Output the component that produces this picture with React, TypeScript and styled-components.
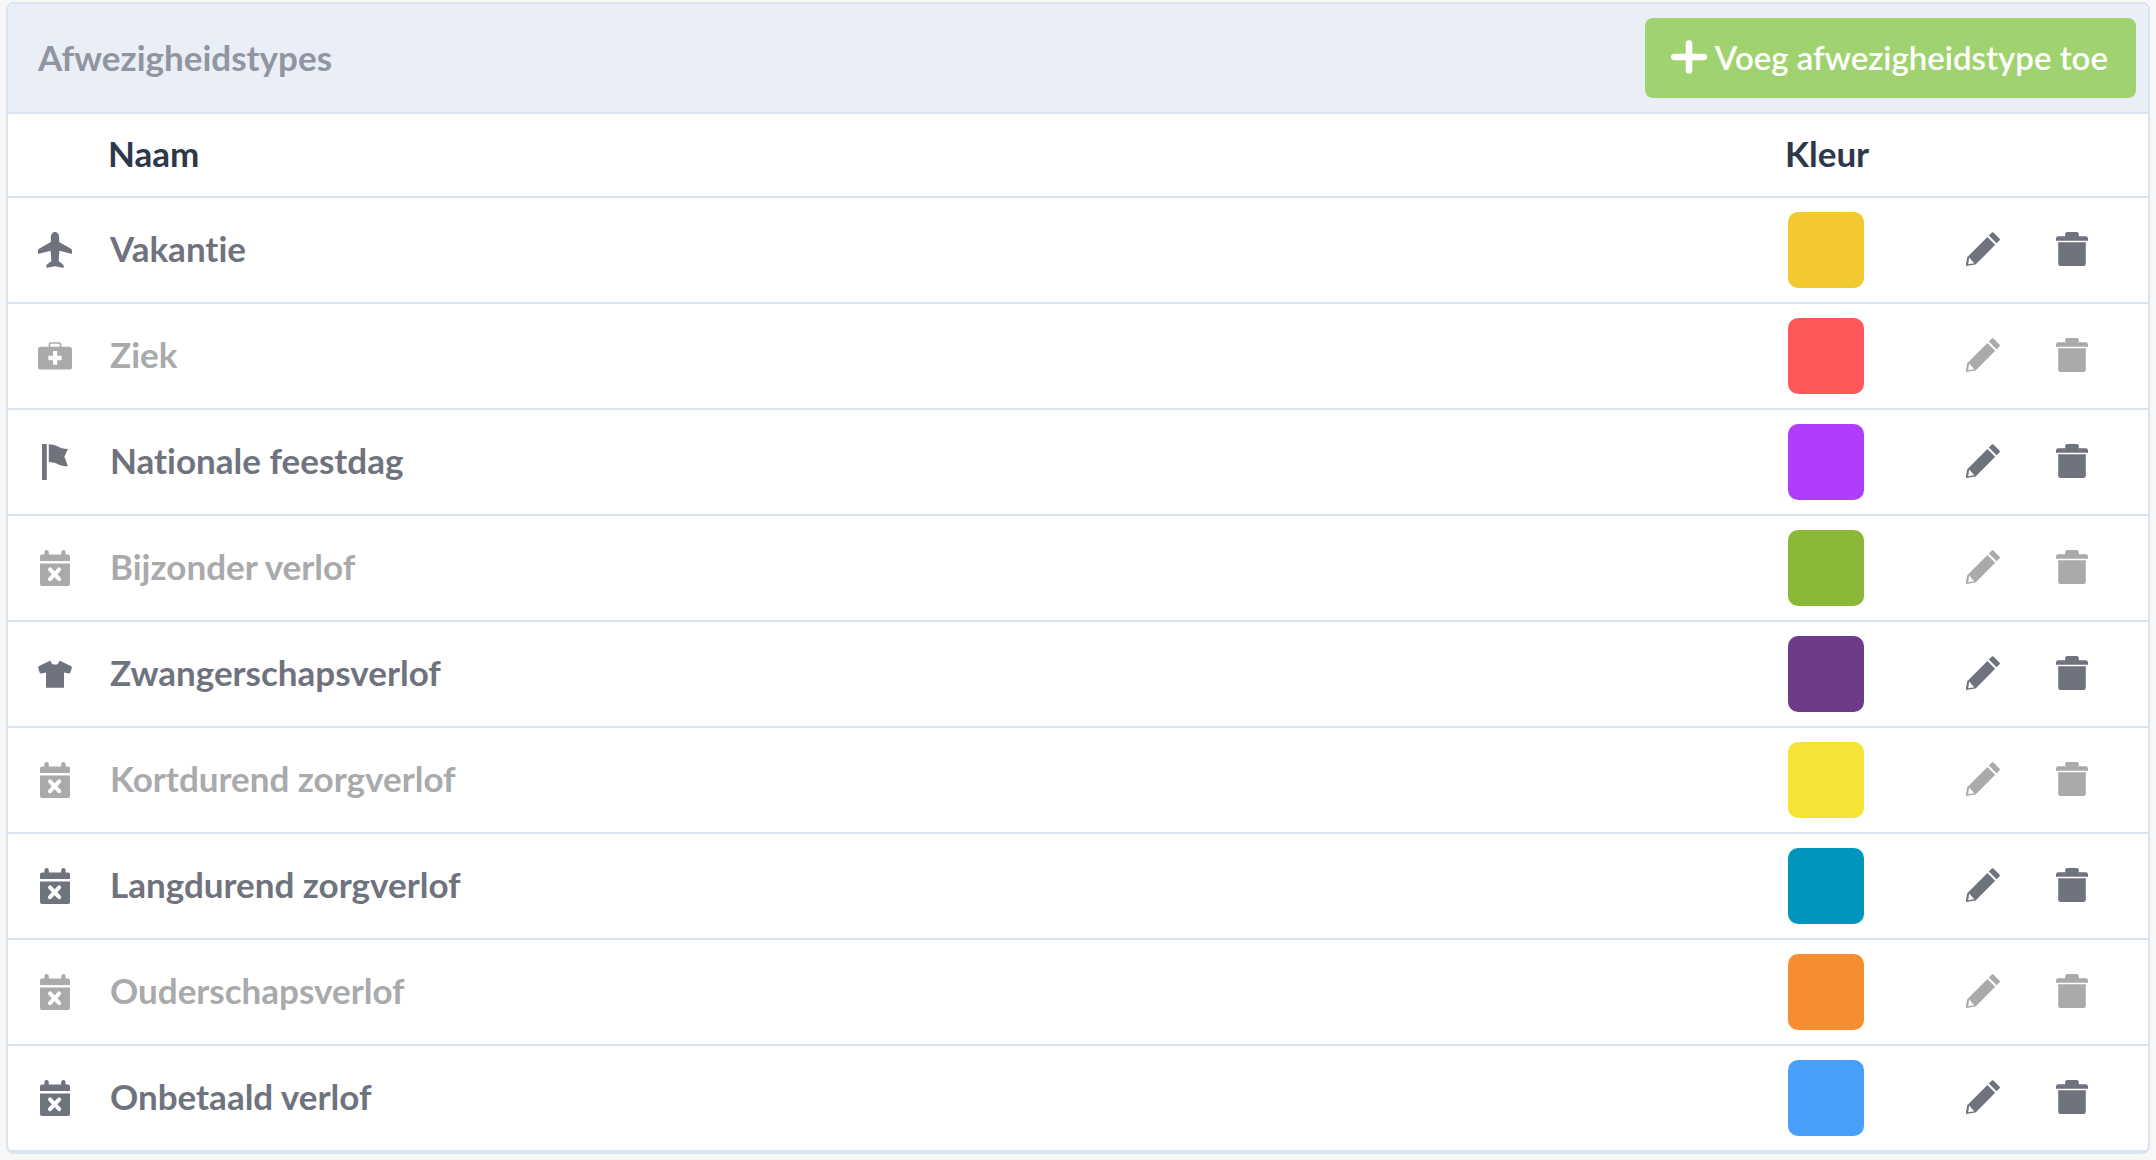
import React from 'react';
import styled, { createGlobalStyle } from 'styled-components';

const colors = {
  page: '#f7f7f7',
  line: '#dae3f0',
  panel: '#eaeef7',
  title: '#9195a1',
  heading: '#2f384b',
  text: '#6f737e',
  muted: '#a9aaac',
  add: '#a0d370',
};

const GlobalStyle = createGlobalStyle`
  *, *::before, *::after { box-sizing: border-box; }
  body {
    margin: 0;
    background: ${colors.page};
    font-family: Lato, "Liberation Sans", sans-serif;
    font-size: 35px;
    line-height: 44px;
    font-weight: 700;
    font-variant-ligatures: none;
  }
`;

const Card = styled.section`
  margin: 2px 6px 6px;
  background: #fff;
  border: 2px solid ${colors.line};
  border-radius: 8px;
`;

const CardHeader = styled.header`
  display: flex;
  align-items: center;
  justify-content: space-between;
  padding: 14px 12px 14px 30px;
  background: ${colors.panel};
  border-bottom: 2px solid ${colors.line};
  border-radius: 8px 8px 0 0;
`;

const Title = styled.h1`
  margin: 0;
  padding-bottom: 2px;
  font-size: 35px;
  font-weight: 700;
  color: ${colors.title};
`;

const AddButton = styled.button`
  display: flex;
  align-items: center;
  gap: 8px;
  height: 80px;
  padding: 0 28px 2px 26px;
  border: 0;
  border-radius: 8px;
  background: ${colors.add};
  color: #fff;
  font: inherit;
  font-size: 33px;
  font-weight: 600;
  font-variant-ligatures: none;
  white-space: nowrap;
  cursor: pointer;
`;

const Table = styled.table`
  width: 100%;
  table-layout: fixed;
  border-collapse: separate;
  border-spacing: 0;
`;

const Col = styled.col<{ $width?: number }>`
  width: ${(p) => (p.$width ? `${p.$width}px` : 'auto')};
`;

const HeadCell = styled.th`
  height: 84px;
  padding: 0 0 4px;
  border-bottom: 2px solid ${colors.line};
  color: ${colors.heading};
  font-weight: 700;
  text-align: left;
`;

const Row = styled.tr<{ $muted: boolean }>`
  color: ${(p) => (p.$muted ? colors.muted : colors.text)};
`;

const Cell = styled.td`
  height: 106px;
  padding: 0;
  border-bottom: 2px solid ${colors.line};
  vertical-align: middle;
`;

const IconCell = styled(Cell)`
  padding-left: 30px;
`;

const NameCell = styled(Cell)`
  padding: 0 0 4px 2px;
`;

const ColorCell = styled(Cell)`
  padding-left: 3px;
`;

const Swatch = styled.span<{ $color: string }>`
  display: block;
  width: 76px;
  height: 76px;
  border-radius: 10px;
  background: ${(p) => p.$color};
`;

const IconButton = styled.button`
  display: block;
  padding: 0;
  border: 0;
  background: none;
  color: inherit;
  cursor: pointer;
  &:disabled { cursor: default; }
`;

const Svg = styled.svg`
  display: block;
  fill: currentColor;
`;

const PlaneIcon = () => (
  <Svg width="34" height="36" viewBox="0 0 34 36" aria-hidden="true">
    <path d="M17 0C19.6 0 21.2 2.6 21.2 5.4V10L33 16.8Q34 17.4 34 18.5V21.2Q34 22 33 21.7L21.4 18.8L20.6 29L25 32.4Q25.7 33 25.7 34V35.2Q25.7 36 24.8 35.8L17 34.2L9.2 35.8Q8.3 36 8.3 35.2V34Q8.3 33 9 32.4L13.4 29L12.6 18.8L1 21.7Q0 22 0 21.2V18.5Q0 17.4 1 16.8L12.8 10V5.4C12.8 2.6 14.4 0 17 0Z" />
  </Svg>
);

const MedkitIcon = () => (
  <Svg width="34" height="28" viewBox="0 0 34 28" aria-hidden="true">
    <path d="M11.4 5V2.6Q11.4 1 13 1H21Q22.6 1 22.6 2.6V5" fill="none" stroke="currentColor" strokeWidth="1.6" />
    <path
      fillRule="evenodd"
      d="M2.6 4.8H31.4Q34 4.8 34 7.4V25Q34 27.6 31.4 27.6H2.6Q0 27.6 0 25V7.4Q0 4.8 2.6 4.8ZM15 9V13.8H10.4V18.2H15V22.8H19.2V18.2H23.6V13.8H19.2V9Z"
    />
  </Svg>
);

const FlagIcon = () => (
  <Svg width="34" height="36" viewBox="0 0 34 36" aria-hidden="true">
    <path d="M4 0H8.8V36H4ZM10.8 0.2C20 0.2 20 4.8 30 5L26.4 12.8L30 22.2C20.6 22.8 20 18 10.8 18Z" />
  </Svg>
);

const CalendarIcon = () => (
  <Svg width="34" height="36" viewBox="0 0 34 36" aria-hidden="true">
    <path d="M2 11V6.4Q2 4.4 4 4.4H6.4V2.2A2.2 2.2 0 0 1 10.8 2.2V4.4H23.2V2.2A2.2 2.2 0 0 1 27.6 2.2V4.4H30Q32 4.4 32 6.4V11Z" />
    <path d="M2 13.6H32V34Q32 36 30 36H4Q2 36 2 34Z" />
    <path d="M12 19.4L21.2 29.2M21.2 19.4L12 29.2" fill="none" stroke="#fff" strokeWidth="4" strokeLinecap="round" />
  </Svg>
);

const ShirtIcon = () => (
  <Svg width="34" height="28" viewBox="0 0 34 28" aria-hidden="true">
    <path d="M12.6 0.4Q13.2 4.6 17 4.6Q20.8 4.6 21.4 0.4L32.8 6Q34.2 6.8 33.8 8L32.4 12.4Q32 13.6 30.8 13.5L26 12.6V27.8H8V12.6L3.2 13.5Q2 13.6 1.6 12.4L0.2 8Q-0.2 6.8 1.2 6Z" />
  </Svg>
);

const PencilIcon = () => (
  <Svg width="34" height="36" viewBox="0 0 34 36" aria-hidden="true">
    <path d="M25.8 0.6Q26.6-0.3 27.5 0.6L33.6 6.7Q34.3 7.4 33.6 8.2L30.6 11.2L22.8 3.6Z" />
    <path fillRule="evenodd" d="M21.4 5L29.2 12.8L9.6 32.6L0 34V32L1.2 25.2ZM3.2 25.6L2.2 32.2L8.2 31.3Z" />
  </Svg>
);

const TrashIcon = () => (
  <Svg width="32" height="36" viewBox="0 0 32 36" aria-hidden="true">
    <path d="M9.2 4.2V2Q9.2 0 11.2 0H20.8Q22.8 0 22.8 2V4.2H29.6Q32 4.2 32 6.6V8.8H0V6.6Q0 4.2 2.4 4.2Z" />
    <path d="M2.2 10.2H29.8V31.8Q29.8 34 27.6 34H4.4Q2.2 34 2.2 31.8Z" />
  </Svg>
);

const PlusIcon = () => (
  <Svg width="36" height="34" viewBox="0 0 36 34" aria-hidden="true">
    <path d="M18 3.5V30.5M3.2 17H32.8" fill="none" stroke="currentColor" strokeWidth="6.6" strokeLinecap="round" />
  </Svg>
);

type AbsenceType = { name: string; color: string; icon: () => React.ReactElement; locked: boolean };

const absenceTypes: AbsenceType[] = [
  { name: 'Vakantie', color: '#f2c931', icon: PlaneIcon, locked: false },
  { name: 'Ziek', color: '#ff585b', icon: MedkitIcon, locked: true },
  { name: 'Nationale feestdag', color: '#b03dfb', icon: FlagIcon, locked: false },
  { name: 'Bijzonder verlof', color: '#8bb837', icon: CalendarIcon, locked: true },
  { name: 'Zwangerschapsverlof', color: '#6d3b87', icon: ShirtIcon, locked: false },
  { name: 'Kortdurend zorgverlof', color: '#f5e336', icon: CalendarIcon, locked: true },
  { name: 'Langdurend zorgverlof', color: '#0096bb', icon: CalendarIcon, locked: false },
  { name: 'Ouderschapsverlof', color: '#f48e31', icon: CalendarIcon, locked: true },
  { name: 'Onbetaald verlof', color: '#479ffa', icon: CalendarIcon, locked: false },
];

export default function App() {
  return (
    <>
      <GlobalStyle />
      <Card>
        <CardHeader>
          <Title>Afwezigheidstypes</Title>
          <AddButton type="button">
            <PlusIcon />
            Voeg afwezigheidstype toe
          </AddButton>
        </CardHeader>
        <Table>
          <colgroup>
            <Col $width={100} />
            <Col />
            <Col $width={181} />
            <Col $width={90} />
            <Col $width={92} />
          </colgroup>
          <thead>
            <tr>
              <HeadCell />
              <HeadCell scope="col">Naam</HeadCell>
              <HeadCell scope="col">Kleur</HeadCell>
              <HeadCell />
              <HeadCell />
            </tr>
          </thead>
          <tbody>
            {absenceTypes.map(({ name, color, icon: Icon, locked }) => (
              <Row key={name} $muted={locked}>
                <IconCell><Icon /></IconCell>
                <NameCell>{name}</NameCell>
                <ColorCell><Swatch $color={color} /></ColorCell>
                <Cell>
                  <IconButton type="button" aria-label={`${name} bewerken`} disabled={locked}>
                    <PencilIcon />
                  </IconButton>
                </Cell>
                <Cell>
                  <IconButton type="button" aria-label={`${name} verwijderen`} disabled={locked}>
                    <TrashIcon />
                  </IconButton>
                </Cell>
              </Row>
            ))}
          </tbody>
        </Table>
      </Card>
    </>
  );
}
